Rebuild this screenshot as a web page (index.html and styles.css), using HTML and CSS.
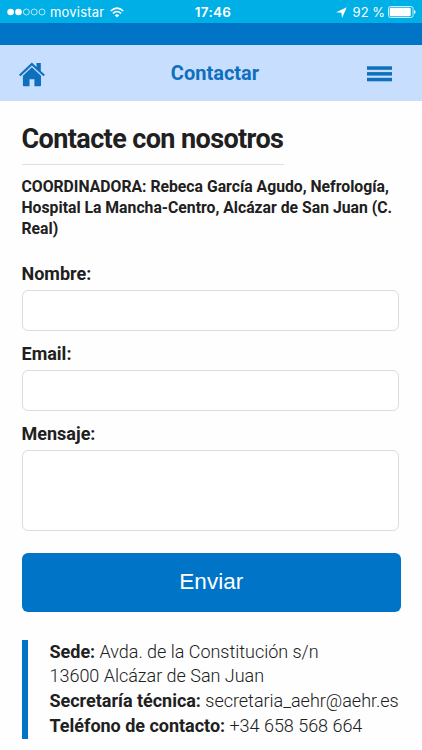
FILE: index.html
```html
<!DOCTYPE html>
<html lang="es">
<head>
  <meta charset="UTF-8" />
  <meta name="viewport" content="width=device-width, initial-scale=1.0"/>
  <title>Contactar</title>
  <link rel="stylesheet" href="styles.css">
</head>
<body>
  <div class="status-bar">
    <div class="status-left">
      <svg class="signal" width="39" height="8" viewBox="0 0 39 8">
        <g fill="#fff">
          <circle cx="3.6" cy="4" r="3.3"/>
          <circle cx="11.5" cy="4" r="3.3"/>
        </g>
        <g fill="none" stroke="#fff" stroke-width="0.7">
          <circle cx="19.4" cy="4" r="3"/>
          <circle cx="27.2" cy="4" r="3"/>
          <circle cx="35" cy="4" r="3"/>
        </g>
      </svg>
      <span class="carrier">movistar</span>
      <svg class="wifi" width="14" height="11" viewBox="0 0 14 11">
        <g fill="none" stroke="#fff" stroke-width="1.6">
          <path d="M0.7 4 Q7 -1.8 13.3 4"/>
          <path d="M2.9 6.4 Q7 2.6 11.1 6.4"/>
        </g>
        <path d="M4.7 8.2 Q7 6.3 9.3 8.2 L7 10.6 Z" fill="#fff"/>
      </svg>
    </div>
    <span class="time">17:46</span>
    <div class="status-right">
      <svg width="11" height="11" viewBox="0 0 10 10">
        <path d="M9.8 0.2 L5.5 9.9 L4.9 5.3 L0.1 4.7 Z" fill="#fff"/>
      </svg>
      <span class="percent">92 %</span>
      <svg class="battery" width="28" height="12" viewBox="0 0 28 12">
        <rect x="0.5" y="0.5" width="24.5" height="11" rx="2" fill="none" stroke="#fff" stroke-width="0.8"/>
        <rect x="1.7" y="1.7" width="21" height="8.6" rx="1" fill="#fff"/>
        <path d="M26 4 Q27.6 4.6 27.6 6 Q27.6 7.4 26 8 Z" fill="#fff"/>
      </svg>
    </div>
  </div>
  <div class="top-strip"></div>

  <header class="header">
    <a class="home" href="#" aria-label="Inicio">
      <svg width="26" height="25" viewBox="0 0 26 25" fill="#0e6fbd">
        <path d="M12.9 0.6 L17.5 4.9 V1 H21.8 V8.9 L25.9 12.7 L24.5 14.3 L12.9 3.5 L1.5 14.3 L0 12.7 Z"/>
        <path d="M12.9 5.3 L22 13.8 V23.2 Q22 24.3 20.9 24.3 H15.4 V17.2 H10.5 V24.3 H5 Q3.9 24.3 3.9 23.2 V13.8 Z"/>
      </svg>
    </a>
    <span class="header-title">Contactar</span>
    <button class="menu-btn" aria-label="Menú">
      <svg width="25" height="16" viewBox="0 0 25 16" fill="#0e6fbd">
        <rect y="0.3" width="25" height="3.5"/>
        <rect y="6.1" width="25" height="3.5"/>
        <rect y="11.8" width="25" height="3.5"/>
      </svg>
    </button>
  </header>

  <main class="container">
    <h1>Contacte con nosotros</h1>
    <p class="coordinator">COORDINADORA: Rebeca García Agudo, Nefrología, Hospital La Mancha-Centro, Alcázar de San Juan (C. Real)</p>

    <form>
      <label for="nombre">Nombre:</label>
      <input type="text" id="nombre" />
      <label for="email">Email:</label>
      <input type="text" id="email" />
      <label for="mensaje">Mensaje:</label>
      <textarea id="mensaje"></textarea>
      <button type="button" class="send-btn">Enviar</button>
    </form>

    <div class="address">
      <div><b>Sede:</b> Avda. de la Constitución s/n</div>
      <div>13600 Alcázar de San Juan</div>
      <div><b>Secretaría técnica:</b> secretaria_aehr@aehr.es</div>
      <div><b>Teléfono de contacto:</b> +34 658 568 664</div>
    </div>
  </main>
</body>
</html>
```
FILE: styles.css
```css
:root {
  --primary: #0074c6;
  --icon: #0e6fbd;
  --status: #00afe6;
  --header: #c7deff;
  --border: #dcdcdc;
  --text: #202020;
}

* {
  box-sizing: border-box;
}

body {
  margin: 0;
  height: 750px;
  overflow: hidden;
  background: #fefefe;
  font-family: Roboto, "Liberation Sans", sans-serif;
  color: var(--text);
}

.status-bar {
  display: grid;
  grid-template-columns: 1fr auto 1fr;
  align-items: center;
  height: 23px;
  padding: 1px 6px 0 7px;
  background: var(--status);
  color: white;
  font-family: Inter, sans-serif;
  font-size: 13px;
  line-height: 16px;
}

.status-left,
.status-right {
  display: flex;
  align-items: center;
}

.status-right {
  justify-content: flex-end;
}

.carrier {
  margin: 0 6px 0 4px;
  letter-spacing: 0.2px;
}

.time {
  padding-left: 3px;
  font-weight: 600;
  font-size: 13.5px;
  letter-spacing: 0.3px;
}

.percent {
  margin: 0 3px 0 6px;
}

.top-strip {
  height: 22px;
  background: var(--primary);
}

.header {
  display: grid;
  grid-template-columns: 1fr auto 1fr;
  align-items: center;
  height: 56px;
  padding: 0 11px 0 19px;
  background: var(--header);
}

.home {
  height: 25px;
  margin-top: 3px;
}

.header-title {
  color: var(--icon);
  font-size: 20px;
  font-weight: 700;
}

.menu-btn {
  display: flex;
  justify-self: end;
  margin: 2px 19px 0 0;
  padding: 0;
  border: none;
  background: none;
}

.container {
  padding: 21px 21px 0 21.5px;
}

h1 {
  width: 262px;
  height: 42.5px;
  margin: 0;
  border-bottom: 1px solid #dedede;
  font-size: 27px;
  line-height: 34px;
  letter-spacing: -0.6px;
  white-space: nowrap;
}

.coordinator {
  margin: 11.5px 0 23px;
  font-size: 15.75px;
  font-weight: 700;
  line-height: 21.2px;
}

label {
  display: block;
  height: 27px;
  font-size: 18px;
  font-weight: 700;
  line-height: 21px;
}

input,
textarea {
  display: block;
  width: 377.5px;
  height: 41px;
  margin: 0 0 12px;
  border: 1px solid var(--border);
  border-radius: 6px;
  background: white;
  resize: none;
}

textarea {
  height: 81px;
  margin-bottom: 22px;
}

.send-btn {
  display: block;
  width: 379.5px;
  height: 59px;
  padding: 0;
  border: none;
  border-radius: 6px;
  background: var(--primary);
  color: white;
  font-family: "Liberation Sans", sans-serif;
  font-size: 22.5px;
}

.address {
  height: 99px;
  margin-top: 28px;
  padding-left: 22px;
  border-left: 6px solid var(--primary);
  font-size: 18px;
  font-weight: 300;
  line-height: 24.75px;
  letter-spacing: -0.02px;
  white-space: nowrap;
}

.address b {
  font-weight: 700;
}
```
